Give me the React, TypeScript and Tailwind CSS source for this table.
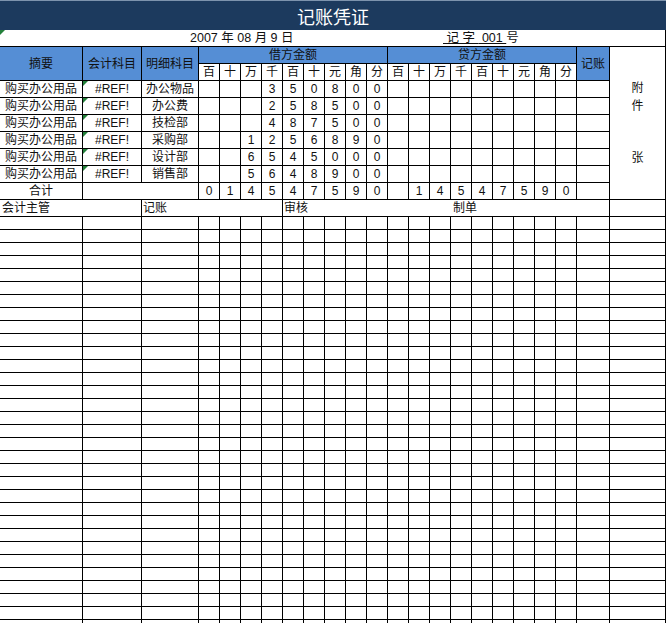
import React from "react"

const debitRows = [
  { summary: "购买办公用品", account: "#REF!", detail: "办公物品", digits: ["", "", "", "3", "5", "0", "8", "0", "0"] },
  { summary: "购买办公用品", account: "#REF!", detail: "办公费", digits: ["", "", "", "2", "5", "8", "5", "0", "0"] },
  { summary: "购买办公用品", account: "#REF!", detail: "技检部", digits: ["", "", "", "4", "8", "7", "5", "0", "0"] },
  { summary: "购买办公用品", account: "#REF!", detail: "采购部", digits: ["", "", "1", "2", "5", "6", "8", "9", "0"] },
  { summary: "购买办公用品", account: "#REF!", detail: "设计部", digits: ["", "", "6", "5", "4", "5", "0", "0", "0"] },
  { summary: "购买办公用品", account: "#REF!", detail: "销售部", digits: ["", "", "5", "6", "4", "8", "9", "0", "0"] },
]

const units = ["百", "十", "万", "千", "百", "十", "元", "角", "分"]
const totalDebit = ["0", "1", "4", "5", "4", "7", "5", "9", "0"]
const totalCredit = ["", "1", "4", "5", "4", "7", "5", "9", "0"]
const blank9 = ["", "", "", "", "", "", "", "", ""]

const cell = "border-r border-b border-black flex items-center justify-center"

function Flag() {
  return (
    <svg className="absolute left-0 top-0" width="5" height="5">
      <polygon points="0,0 5,0 0,5" fill="#23803a" />
    </svg>
  )
}

export default function App() {
  return (
    <div className="w-[666px] h-[623px] overflow-hidden bg-white text-[12px] leading-none text-[#111] font-['Liberation_Sans','Noto_Sans_CJK_SC',sans-serif]">
      <div className="h-[30px] border-t border-[#7d93ad] bg-[#1c3a5e] flex items-center justify-center">
        <span className="text-white text-[18px] font-['Noto_Sans_CJK_SC',sans-serif]">记账凭证</span>
      </div>

      <div className="grid grid-cols-[83px_59px_57px_repeat(18,21px)_33px_56px] grid-rows-[repeat(11,17px)_repeat(32,13px)]">
        {/* date row */}
        <div className="relative col-span-23 border-r border-b border-black flex items-center pl-[190px] text-[12.5px]">
          <Flag />
          <span className="inline-block w-[253px]">2007 年 08 月 9 日</span>
          <span>
            <span className="underline whitespace-pre"> 记 字 </span>
            <span className="underline whitespace-pre"> 001 </span>号
          </span>
        </div>

        {/* header row 1 */}
        <div className={`${cell} row-span-2 bg-[#558ed5]`}>摘要</div>
        <div className={`${cell} row-span-2 bg-[#558ed5]`}>会计科目</div>
        <div className={`${cell} row-span-2 bg-[#558ed5]`}>明细科目</div>
        <div className={`${cell} col-span-9 bg-[#558ed5]`}>借方金额</div>
        <div className={`${cell} col-span-9 bg-[#558ed5]`}>贷方金额</div>
        <div className={`${cell} row-span-2 bg-[#558ed5]`}>记账</div>
        <div className="row-span-9 border-r border-b border-black flex flex-col items-center pt-[32px]">
          <span className="leading-[18px]">附</span>
          <span className="leading-[18px]">件</span>
          <span className="leading-[18px] mt-[34px]">张</span>
        </div>

        {/* header row 2 */}
        {[...units, ...units].map((u, i) => (
          <div key={`u${i}`} className={cell}>{u}</div>
        ))}

        {/* data rows */}
        {debitRows.map((r, ri) => (
          <React.Fragment key={`r${ri}`}>
            <div className={cell}>{r.summary}</div>
            <div className={`${cell} relative`}>
              <Flag />
              {r.account}
            </div>
            <div className={cell}>{r.detail}</div>
            {[...r.digits, ...blank9].map((d, i) => (
              <div key={i} className={cell}>{d}</div>
            ))}
            <div className={cell}></div>
          </React.Fragment>
        ))}

        {/* totals */}
        <div className={cell}>合计</div>
        <div className={`${cell} col-span-2`}></div>
        {[...totalDebit, ...totalCredit].map((d, i) => (
          <div key={`t${i}`} className={cell}>{d}</div>
        ))}
        <div className={cell}></div>

        {/* signatures */}
        <div className="col-span-2 border-r border-b border-black flex items-center pl-[2px]">会计主管</div>
        <div className="col-span-5 border-r border-b border-black flex items-center pl-[1px]">记账</div>
        <div className="col-span-8 border-b border-black flex items-center pl-[1px]">审核</div>
        <div className="col-span-7 border-r border-b border-black flex items-center pl-[2px]">制单</div>
        <div className="border-r border-b border-black"></div>

        {/* empty grid */}
        {Array.from({ length: 32 * 23 }).map((_, i) => (
          <div key={`g${i}`} className="border-r border-b border-black"></div>
        ))}
      </div>
    </div>
  )
}
